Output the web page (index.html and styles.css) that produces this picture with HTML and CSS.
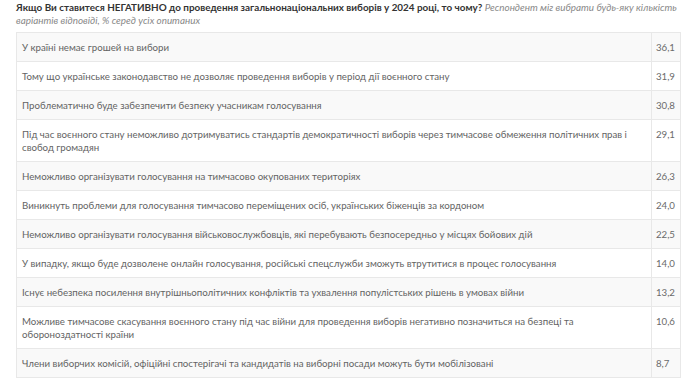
FILE: index.html
```html
<!DOCTYPE html>
<html lang="uk">
<head>
<meta charset="utf-8">
<link rel="stylesheet" href="styles.css">
</head>
<body>
<div class="wrap">
  <p class="title"><b>Якщо Ви ставитеся НЕГАТИВНО до проведення загальнонаціональних виборів у 2024 році, то чому?</b> <i>Респондент міг вибрати будь-яку кількість варіантів відповіді, % серед усіх опитаних</i></p>
  <table class="data">
    <tr><td class="q">У країні немає грошей на вибори</td><td class="v">36,1</td></tr>
    <tr><td class="q">Тому що українське законодавство не дозволяє проведення виборів у період дії воєнного стану</td><td class="v">31,9</td></tr>
    <tr><td class="q">Проблематично буде забезпечити безпеку учасникам голосування</td><td class="v">30,8</td></tr>
    <tr><td class="q">Під час воєнного стану неможливо дотримуватись стандартів демократичності виборів через тимчасове обмеження політичних прав і свобод громадян</td><td class="v">29,1</td></tr>
    <tr><td class="q">Неможливо організувати голосування на тимчасово окупованих територіях</td><td class="v">26,3</td></tr>
    <tr><td class="q">Виникнуть проблеми для голосування тимчасово переміщених осіб, українських біженців за кордоном</td><td class="v">24,0</td></tr>
    <tr><td class="q">Неможливо організувати голосування військовослужбовців, які перебувають безпосередньо у місцях бойових дій</td><td class="v">22,5</td></tr>
    <tr><td class="q">У випадку, якщо буде дозволене онлайн голосування, російські спецслужби зможуть втрутитися в процес голосування</td><td class="v">14,0</td></tr>
    <tr><td class="q">Існує небезпека посилення внутрішньополітичних конфліктів та ухвалення популістських рішень в умовах війни</td><td class="v">13,2</td></tr>
    <tr><td class="q">Можливе тимчасове скасування воєнного стану під час війни для проведення виборів негативно позначиться на безпеці та обороноздатності країни</td><td class="v">10,6</td></tr>
    <tr><td class="q">Члени виборчих комісій, офіційні спостерігачі та кандидатів на виборні посади можуть бути мобілізовані</td><td class="v">8,7</td></tr>
  </table>
</div>
</body>
</html>
```
FILE: styles.css
```css
html, body {
  margin: 0;
  padding: 0;
  background: #fff;
}
body {
  font-family: Lato, "Open Sans", sans-serif;
  font-size: 10px;
  color: #555;
}
.wrap {
  padding: 1px 9px 0 16px;
}
.title {
  margin: 0 0 5px 0;
  line-height: 13px;
  font-size: 9.9px;
}
.title b {
  color: #333;
  font-weight: 700;
}
.title i {
  color: #888;
  font-weight: 400;
}
.data {
  width: 665px;
  border-collapse: collapse;
  font-size: 9.7px;
  line-height: 13px;
}
.data tr:nth-child(odd) {
  background: #f9f9f9;
}
.data td {
  border: 1px solid #e8e8e8;
  padding: 7.5px 5px 7.5px 5px;
  vertical-align: top;
  color: #636363;
}
.data td.v {
  width: 18px;
  padding-left: 4px;
  padding-right: 5px;
  color: #6a6a6a;
}
```
